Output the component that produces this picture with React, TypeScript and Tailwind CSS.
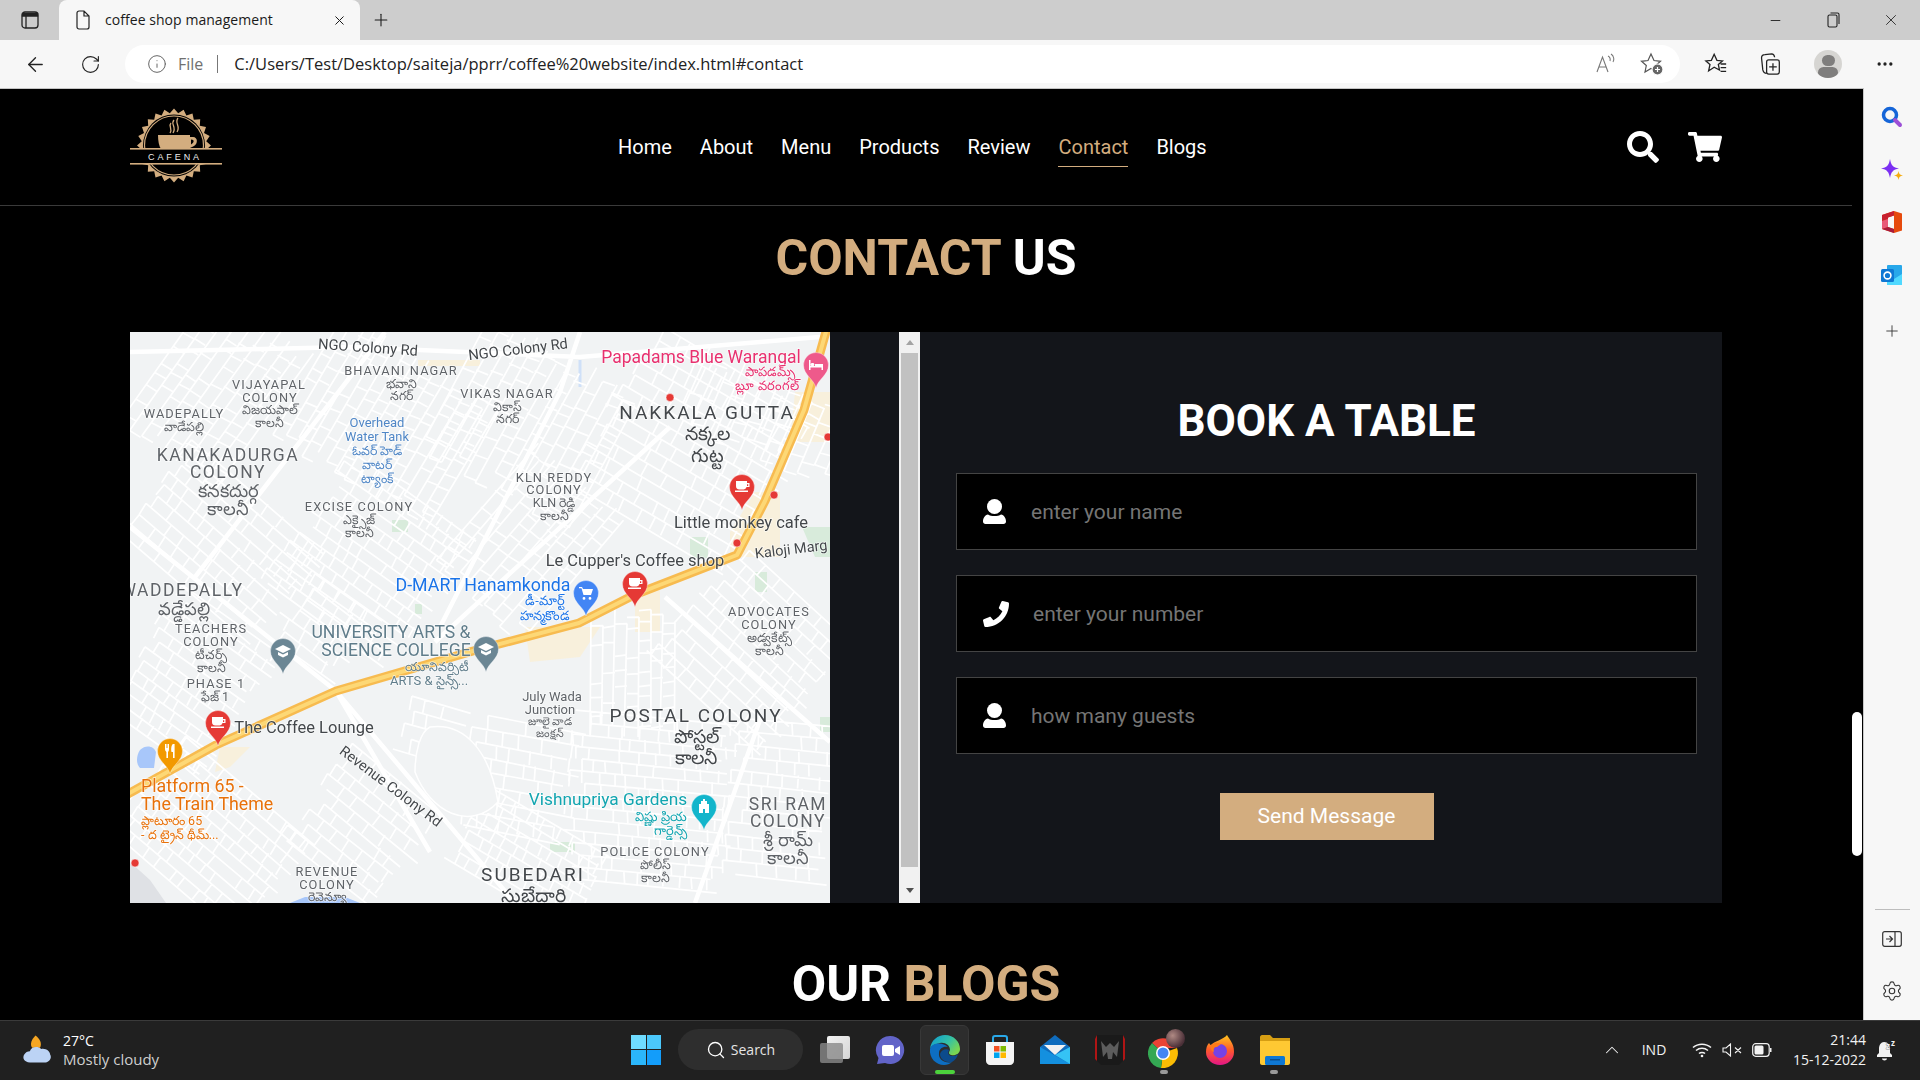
import React from 'react';
import { ArrowLeft, RotateCw, Info, Plus, X, Minus, Search, MoreHorizontal, ChevronUp, Settings } from 'lucide-react';
import { FaSearch, FaShoppingCart, FaPhone } from 'react-icons/fa';

const navItems = ['Home', 'About', 'Menu', 'Products', 'Review', 'Contact', 'Blogs'];

// label: text, x, centre y, size, colour, anchor, spacing, rotate
type L = [string, number, number, number?, string?, string?, number?, number?];
const G = '#5f6368';
const D = '#43474b';
const labels: L[] = [
  ['NGO Colony Rd', 238, 15, 14.7, D, 'middle', 0, 4],
  ['NGO Colony Rd', 388, 17, 14.7, D, 'middle', 0, -7],
  ['BHAVANI NAGAR', 271, 38, 12.8, G, 'middle', 1.1],
  ['భవాని', 271, 51, 12.5, G], ['నగర్', 271, 63, 12.5, G],
  ['VIJAYAPAL', 139, 52, 12.8, G, 'middle', 1.1], ['COLONY', 140, 65, 12.8, G, 'middle', 1.1],
  ['విజయపాల్', 140, 77, 12.5, G], ['కాలనీ', 139, 90, 12.5, G],
  ['WADEPALLY', 54, 81, 12.8, G, 'middle', 1.1], ['వాడేపల్లి', 54, 94, 12.5, G],
  ['VIKAS NAGAR', 377, 61, 12.8, G, 'middle', 1.1], ['వికాస్', 377, 74, 12.5, G], ['నగర్', 377, 86, 12.5, G],
  ['Papadams Blue Warangal', 571, 24.5, 17.5, '#e8316f'],
  ['పాపడమ్స్', 640, 39, 13, '#e8316f'], ['బ్లూ వరంగల్', 637, 53, 13, '#e8316f'],
  ['NAKKALA GUTTA', 577, 80, 19, D, 'middle', 2],
  ['నక్కల', 577, 101, 19, D], ['గుట్ట', 577, 123, 19, D],
  ['Overhead', 247, 90, 13, '#4f86c6'], ['Water Tank', 247, 104, 12.8, '#4f86c6'],
  ['ఓవర్ హెడ్', 247, 118, 12.5, '#4f86c6'], ['వాటర్', 247, 132, 12.5, '#4f86c6'], ['ట్యాంక్', 247, 146, 12.5, '#4f86c6'],
  ['KANAKADURGA', 98, 123, 17.5, G, 'middle', 1.5], ['COLONY', 98, 140, 17.5, G, 'middle', 1.5],
  ['కనకదుర్గ', 98, 159, 18, G], ['కాలనీ', 98, 177, 18, G],
  ['EXCISE COLONY', 229, 174, 12.8, G, 'middle', 1.1], ['ఎక్సైజ్', 229, 187, 12.5, G], ['కాలనీ', 229, 200, 12.5, G],
  ['KLN REDDY', 424, 145, 12.8, G, 'middle', 1.1], ['COLONY', 424, 157, 12.8, G, 'middle', 1.1],
  ['KLN రెడ్డి', 424, 170, 12.5, G], ['కాలనీ', 424, 183, 12.5, G],
  ['Little monkey cafe', 611, 190, 16.5, D],
  ['Kaloji Marg', 661, 217, 14.5, D, 'middle', 0, -7],
  ["Le Cupper's Coffee shop", 505, 228, 16.5, D],
  ['D-MART Hanamkonda', 353, 253, 17.8, '#1a73e8'],
  ['డీ-మార్ట్', 415, 268, 13, '#1a73e8'], ['హన్మకొండ', 415, 283, 13, '#1a73e8'],
  ['ADVOCATES', 639, 279, 12.8, G, 'middle', 1.1], ['COLONY', 639, 292, 12.8, G, 'middle', 1.1],
  ['అడ్వకేట్స్', 639, 305, 12.5, G], ['కాలనీ', 639, 318, 12.5, G],
  ['WADDEPALLY', 52, 258, 17.5, G, 'middle', 1.5], ['వడ్డేపల్లి', 54, 277, 18, G],
  ['TEACHERS', 81, 296, 12.8, G, 'middle', 1.1], ['COLONY', 81, 309, 12.8, G, 'middle', 1.1],
  ['టీచర్స్', 81, 322, 12.5, G], ['కాలనీ', 81, 335, 12.5, G],
  ['UNIVERSITY ARTS &', 261, 300, 17.6, '#607d8b'], ['SCIENCE COLLEGE', 266, 318, 17.6, '#607d8b'],
  ['యూనివర్సిటీ', 307, 334, 12.5, '#607d8b'], ['ARTS & సైన్స్...', 299, 348, 13, '#607d8b'],
  ['PHASE 1', 86, 351, 12.8, G, 'middle', 1.1], ['ఫేజ్ 1', 85, 364, 12.5, G],
  ['The Coffee Lounge', 174, 395, 16.5, D],
  ['Platform 65 -', 11, 454, 17.8, '#e8710a', 'start'],
  ['The Train Theme', 11, 472, 17.8, '#e8710a', 'start'],
  ['ప్లాటూరం 65', 11, 488, 12.5, '#e8710a', 'start'], ['- ద ట్రైన్ థీమ్...', 11, 502, 12.5, '#e8710a', 'start'],
  ['July Wada', 422, 364, 13, G], ['Junction', 420, 377, 13, G], ['జూలై వాడ', 420, 389, 11, G], ['జంక్షన్', 420, 401, 11, G],
  ['POSTAL COLONY', 566, 383, 19, D, 'middle', 2], ['పోస్టల్', 566, 404, 19, D], ['కాలనీ', 566, 425, 19, D],
  ['Revenue Colony Rd', 261, 454, 14.5, D, 'middle', 0, 37],
  ['Vishnupriya Gardens', 478, 467, 17.3, '#12a5b0'],
  ['విష్ణు ప్రియ', 531, 484, 13, '#12a5b0'], ['గార్డెన్స్', 540, 498, 13, '#12a5b0'],
  ['SRI RAM', 658, 472, 17.5, G, 'middle', 1.5], ['COLONY', 658, 489, 17.5, G, 'middle', 1.5],
  ['శ్రీ రామ్', 658, 508, 18, G], ['కాలనీ', 658, 526, 18, G],
  ['POLICE COLONY', 525, 519, 12.8, G, 'middle', 1.1], ['పోలీస్', 525, 532, 12.5, G], ['కాలనీ', 525, 545, 12.5, G],
  ['REVENUE', 197, 539, 12.8, G, 'middle', 1.1], ['COLONY', 197, 552, 12.8, G, 'middle', 1.1], ['రెవెన్యూ', 197, 564, 12.5, G],
  ['SUBEDARI', 403, 542, 19, D, 'middle', 2], ['సుబేదారి', 403, 563, 19, D],
];

// small streets, scattered per zone at the zone's own angle
const zones = [
  [90, 60, 180, 130, -55, 13], [260, 90, 150, 190, -60, 12], [400, 90, 160, 170, -62, 13], [560, 120, 200, 190, 30, 14],
  [90, 210, 190, 120, 40, 13], [240, 230, 170, 160, 35, 12], [400, 210, 170, 120, -50, 13], [650, 90, 90, 190, -68, 13],
  [60, 350, 130, 150, 35, 12], [190, 300, 90, 90, 35, 13], [620, 320, 170, 150, 42, 13], [500, 340, 130, 90, 90, 12],
  [80, 510, 180, 130, 40, 12], [230, 500, 130, 130, 38, 13], [390, 450, 120, 120, 10, 14], [520, 470, 170, 170, 5, 12],
  [650, 470, 110, 160, 5, 13], [400, 530, 160, 90, 30, 12], [300, 400, 70, 60, 15, 14],
];
function makeStreets() {
  let seed = 7;
  const rnd = () => { seed = (seed * 16807) % 2147483647; return seed / 2147483647; };
  let d = '';
  for (const [cx, cy, w, h, angle, step] of zones) {
    const a = (angle * Math.PI) / 180;
    const p = (u: number, v: number) =>
      `${(cx + u * Math.cos(a) - v * Math.sin(a)).toFixed(1)} ${(cy + u * Math.sin(a) + v * Math.cos(a)).toFixed(1)}`;
    for (let v = -h / 2; v < h / 2; v += step) {
      const s = -w / 2 + rnd() * 20;
      d += `M${p(s, v)}L${p(w / 2 - rnd() * 20, v + rnd() * 3)}`;
      for (let u = s; u < w / 2 - 10; u += step * (0.8 + rnd() * 0.9)) {
        if (v + step < h / 2 && rnd() > 0.18) d += `M${p(u, v)}L${p(u + rnd() * 2, v + step)}`;
      }
    }
  }
  return d;
}
const streets = makeStreets();
const road = 'M-4 463L86 413L206 359L343 319L449 291L504 263L607 223L635 169L674 78L697 -4';

function Pin({ x, y, color, kind }: { x: number; y: number; color: string; kind: 'cup' | 'cart' | 'cap' | 'fork' | 'bed' | 'tower' }) {
  return (
    <g transform={`translate(${x} ${y})`}>
      <path d="M0 23C-2 14 -12.5 10 -12.5 0A12.5 12.5 0 1 1 12.5 0C12.5 10 2 14 0 23Z" fill={color} stroke="#fff" strokeOpacity="0.6" strokeWidth="0.6" />
      {kind === 'cup' && <path d="M-6 -6H5V-4H7.5V0H4.5C4 2 2.5 2.5 0 2.5H-2.5C-5 2.5 -6 1 -6 -1ZM5 -2.8V-1H6.2V-2.8ZM-7 3.6H6V5H-7Z" fill="#fff" fillRule="evenodd" />}
      {kind === 'cart' && <path d="M-7 -6H-4L-3 -4H7L5 2H-2.5L-4.5 -4.8H-7ZM-2 4A1.4 1.4 0 1 0 -2 6.8A1.4 1.4 0 1 0 -2 4ZM4 4A1.4 1.4 0 1 0 4 6.8A1.4 1.4 0 1 0 4 4Z" fill="#fff" />}
      {kind === 'cap' && <path d="M0 -6L8 -2L0 2L-8 -2ZM-5 1L0 3.5L5 1V4L0 6.5L-5 4Z" fill="#fff" />}
      {kind === 'fork' && <path d="M-5 -7V-2C-5 0 -4 0 -3.6 1V7H-2V1C-1.6 0 -1 0 -1 -2V-7H-2V-3H-2.5V-7H-3.5V-3H-4V-7ZM3 -7C1 -6 1 -1 1.5 1H3V7H4.6V-7Z" fill="#fff" />}
      {kind === 'bed' && <path d="M-7 -5V5H-5.5V2.5H5.5V5H7V-1H-1V1H-5.5V-5ZM-3.5 -2A1.5 1.5 0 1 0 -3.5 0.9A1.5 1.5 0 1 0 -3.5 -2Z" fill="#fff" />}
      {kind === 'tower' && <path d="M-1 -8H1V-6H3V-3H5V6H1V2H-1V6H-5V-3H-3V-6H-1Z" fill="#fff" />}
    </g>
  );
}

function MapPanel() {
  return (
    <div className="w-[700px] h-[571px] shrink-0 overflow-hidden bg-[#f1f3f4]">
      <svg width="700" height="571" viewBox="0 0 700 571" className="blur-[0.5px]" fontFamily="Roboto, 'Noto Sans', sans-serif">
        <rect width="700" height="571" fill="#f1f3f4" />
        <path d="M288 28H350V34H288ZM625 160H650V225H600V200ZM395 295H470L450 325L400 330ZM505 255H530V300H505ZM90 415H120L100 435L85 440ZM665 60H700V110H660Z" fill="#f8f0dc" />
        <path d="M0 530L20 548L36 571H0Z" fill="#dfe1e5" />
        <path d="M262 188H278V200H262ZM672 195H700V225H685ZM625 240H637V260H625ZM285 272H292V282H285ZM420 510H445V520H420ZM690 385H700V400H690ZM560 205H578V226H560Z" fill="#d8ebdb" />
        <path d="M10 418C16 412 24 414 26 420L24 436L10 436C6 432 6 424 10 418ZM160 571L175 565H215L230 571Z" fill="#a8c7fa" />
        <path d="M450 28L450 55" stroke="#cfe0f8" strokeWidth="3" />
        <path d={streets} fill="none" stroke="#fff" strokeWidth="1.7" />
        <path d="M255 0L65 245M450 0L430 60L310 295M540 95L305 310M0 195L206 359L385 571M535 265L700 410M631 385L565 571M0 20L220 15L450 25L690 5M206 359L300 520" fill="none" stroke="#fff" strokeWidth="4.5" />
        <path d="M300 395C335 390 360 420 368 470C340 500 300 480 285 440C285 420 290 400 300 395Z" fill="#f1f3f4" stroke="#fff" strokeWidth="1.5" />
        <path d={road} fill="none" stroke="#f7bb50" strokeWidth="9" strokeLinejoin="round" />
        <path d={road} fill="none" stroke="#fdd876" strokeWidth="4" strokeLinejoin="round" />
        {[[540, 65.5], [698, 105], [644, 163], [607, 211], [5, 531]].map(([x, y]) => (
          <circle key={`${x}-${y}`} cx={x} cy={y} r="4" fill="#e53935" stroke="#fff" strokeWidth="0.5" />
        ))}
        {labels.map(([text, x, y, size = 14, fill = G, anchor = 'middle', spacing = 0, rot = 0], i) => (
          <text key={i} x={x} y={y + size * 0.36} fontSize={size} fill={fill} textAnchor={anchor as 'middle'} letterSpacing={spacing}
            stroke="#fff" strokeOpacity="0.65" strokeWidth="1.5" paintOrder="stroke" transform={rot ? `rotate(${rot} ${x} ${y})` : undefined}>
            {text}
          </text>
        ))}
        <Pin x={686} y={33} color="#ee5a8b" kind="bed" />
        <Pin x={612} y={155} color="#e53935" kind="cup" />
        <Pin x={505} y={252} color="#e53935" kind="cup" />
        <Pin x={88} y={391} color="#e53935" kind="cup" />
        <Pin x={456} y={261} color="#4285f4" kind="cart" />
        <Pin x={153} y={319} color="#6b8694" kind="cap" />
        <Pin x={356} y={317} color="#6b8694" kind="cap" />
        <Pin x={40} y={419} color="#f29900" kind="fork" />
        <Pin x={574} y={475} color="#12b5cb" kind="tower" />
      </svg>
    </div>
  );
}

function Logo() {
  const spikes = Array.from({ length: 48 }, (_, i) => {
    const a = (i * Math.PI) / 24 - Math.PI / 2;
    const r = i % 2 ? 32.5 : 37;
    return `${(44 + r * Math.cos(a)).toFixed(1)},${(37.5 + r * Math.sin(a)).toFixed(1)}`;
  }).join(' ');
  return (
    <svg width="92" height="76" viewBox="0 0 92 76" className="shrink-0 mb-[2px]">
      <polygon points={spikes} fill="#d3ad7f" />
      <circle cx="44" cy="37.5" r="31" fill="#000" />
      <circle cx="44" cy="37.5" r="29.5" fill="none" stroke="#d3ad7f" strokeWidth="1.2" />
      <rect x="0" y="40" width="92" height="16" fill="#000" />
      <path d="M28 27H60V29H63C68 29 68 36 64 38L58 41H31C29 38 28 33 28 27ZM61 31.5V36.5C64 35 65 31.5 61 31.5Z" fill="#d3ad7f" fillRule="evenodd" />
      <path d="M44 12C40 16 47 19 43 25M48 10C44 15 51 18 47 24M41 15C38 18 43 21 40 25" fill="none" stroke="#d3ad7f" strokeWidth="1.3" />
      <rect x="0" y="40" width="92" height="1.6" fill="#d3ad7f" />
      <rect x="0" y="55" width="92" height="1.6" fill="#d3ad7f" />
      <text x="45" y="52" fontSize="9" fill="#eeeeee" textAnchor="middle" letterSpacing="2.9" fontFamily="'Liberation Sans', sans-serif">CAFENA</text>
    </svg>
  );
}

function UserIcon() {
  return (
    <svg width="23" height="25" viewBox="0 0 23 25" fill="#fff" className="shrink-0 mr-[25px]">
      <circle cx="11.5" cy="7.5" r="7.5" />
      <path d="M5 15.5C8 17.5 15 17.5 18 15.5C21 16 23 19 23 22.5C23 24 22 25 20.5 25H2.5C1 25 0 24 0 22.5C0 19 2 16 5 15.5Z" />
    </svg>
  );
}

function BookInput({ icon, text }: { icon: React.ReactNode; text: string }) {
  return (
    <div className="flex items-center h-[77px] border border-[#444] bg-black pl-[26px]">
      {icon}
      <input placeholder={text} className="flex-1 pt-[2px] bg-transparent outline-none text-[21px] placeholder:text-[#757575]" />
    </div>
  );
}

function TaskIcon({ children, active, dot }: { children: React.ReactNode; active?: boolean; dot?: boolean }) {
  return (
    <div className="relative w-[55px] h-[50px] flex items-center justify-center">
      {active && <div className="absolute inset-x-[3px] inset-y-0 rounded-md bg-[#2d2d2d] border border-[#383838]" />}
      <div className="relative">{children}</div>
      {active && <div className="absolute bottom-[1px] left-[18px] w-[20px] h-[4px] rounded-full bg-[#4cd23c]" />}
      {dot && <div className="absolute bottom-[1px] left-[23px] w-[8px] h-[4px] rounded-full bg-[#9a9a9a]" />}
    </div>
  );
}

export default function App() {
  return (
    <div className="w-[1920px] h-[1080px] flex flex-col overflow-hidden bg-black font-['Roboto',sans-serif]">
      {/* tab strip */}
      <div className="h-[40px] shrink-0 flex items-end bg-[#cdcdcd] font-['Open_Sans',sans-serif] text-[#1a1a1a]">
        <div className="w-[59px] h-[40px] flex items-center justify-center">
          <svg width="18" height="18" viewBox="0 0 18 18" fill="none" stroke="#222" strokeWidth="1.3">
            <rect x="1" y="1" width="16" height="16" rx="3" />
            <path d="M1.5 2.5H16.5V5H1.5Z" fill="#222" />
            <path d="M5 5V17" />
          </svg>
        </div>
        <div className="w-[301px] h-[40px] flex items-center rounded-t-lg bg-[#f7f7f7]">
          <svg width="16" height="20" viewBox="0 0 16 20" fill="none" stroke="#222" strokeWidth="1.2" className="ml-[16px]">
            <path d="M2 3a2 2 0 0 1 2-2h5l5 5v11a2 2 0 0 1-2 2H4a2 2 0 0 1-2-2ZM9 1v5h5" />
          </svg>
          <span className="ml-[14px] mb-[2px] text-[14px] tracking-[0.05px]">coffee shop management</span>
          <X size={15} className="ml-auto mr-[13px]" strokeWidth={1.6} />
        </div>
        <div className="w-[42px] h-[40px] flex items-center justify-center"><Plus size={20} strokeWidth={1.3} /></div>
        <div className="ml-auto h-[40px] flex items-center">
          <div className="w-[58px] flex justify-center"><Minus size={15} strokeWidth={1.4} /></div>
          <div className="w-[58px] flex justify-center">
            <svg width="13" height="16" viewBox="0 0 13 16" fill="none" stroke="#222" strokeWidth="1.1">
              <rect x="1" y="3" width="9" height="12" rx="1.5" />
              <path d="M3.5 1H10.5A1.5 1.5 0 0 1 12 2.5V12" />
            </svg>
          </div>
          <div className="w-[58px] flex justify-center"><X size={18} strokeWidth={1.1} /></div>
        </div>
      </div>

      {/* toolbar */}
      <div className="h-[48px] shrink-0 flex items-center bg-[#f7f7f7] font-['Open_Sans',sans-serif] text-[#222]">
        <div className="w-[70px] flex justify-center"><ArrowLeft size={23} strokeWidth={1.4} /></div>
        <div className="w-[40px] flex justify-center"><RotateCw size={21} strokeWidth={1.3} /></div>
        <div className="ml-[15px] w-[1555px] h-[38px] flex items-center rounded-full bg-white">
          <Info size={20} strokeWidth={1.2} className="ml-[22px] text-[#666]" />
          <span className="ml-[11px] text-[16px] text-[#707070]">File</span>
          <div className="ml-[14px] w-[1px] h-[18px] bg-[#777]" />
          <span className="ml-[16px] text-[16.5px]">C:/Users/Test/Desktop/saiteja/pprr/coffee%20website/index.html#contact</span>
          <div className="ml-auto w-[46px] flex justify-center">
            <svg width="24" height="24" viewBox="0 0 24 24" fill="none" stroke="#777" strokeWidth="1.1">
              <path d="M3 20L8.5 5L14 20M5 15H12M14 4C16 5 16.5 7 16 9M17 2C20 4 20.5 8 19 10" />
            </svg>
          </div>
          <div className="w-[46px] flex justify-center mr-[5px]">
            <svg width="26" height="26" viewBox="0 0 26 26" fill="none" stroke="#555" strokeWidth="1.2">
              <path d="M12 3L15 9.5L21.5 10.3L16.7 14.5L18 20.5L12 17.5L6 21L7.3 14.5L2.5 10.3L9 9.5Z" />
              <circle cx="18.5" cy="18.5" r="5.5" fill="#666" stroke="#fff" />
              <path d="M18.5 16V21M16 18.5H21" stroke="#fff" />
            </svg>
          </div>
        </div>
        <div className="ml-[13px] w-[45px] flex justify-center">
          <svg width="24" height="24" viewBox="0 0 26 26" fill="none" stroke="#222" strokeWidth="1.4">
            <path d="M11 2.5L14 9L20 9.7L15.5 13.5L16.8 19.5L11 16.5L5 20.5L6.5 13.5L2 9.7L8 9ZM18 13H24M18 17H24M18 21H24" />
          </svg>
        </div>
        <div className="ml-[9px] w-[45px] flex justify-center">
          <svg width="22" height="24" viewBox="0 0 26 28" fill="none" stroke="#222" strokeWidth="1.5">
            <path d="M9 25C6 25 5 23 4.5 21L3 7C3 4 5 3 7 3L15 2C17 2 18 3 18.5 6" />
            <rect x="9" y="9" width="15" height="17" rx="2.5" />
            <path d="M16.5 13V22M12 17.5H21" />
          </svg>
        </div>
        <div className="ml-[22px] w-[28px] h-[28px] rounded-full bg-[#d6d5d2] overflow-hidden flex flex-col items-center">
          <div className="mt-[5px] w-[13px] h-[13px] rounded-full bg-[#7f7e7d]" />
          <div className="mt-[1px] w-[20px] h-[14px] rounded-full bg-[#7f7e7d]" />
        </div>
        <div className="ml-[29px] w-[28px] flex justify-center"><MoreHorizontal size={20} strokeWidth={2} /></div>
      </div>

      <div className="flex-1 min-h-0 flex">
        {/* page */}
        <div className="relative w-[1863px] shrink-0 overflow-hidden bg-black border-t border-[#c4c4c4] text-white">
          <div className="w-[1852px]">
            <header className="h-[117px] flex items-center px-[130px] border-b border-[#3a3a3a]">
              <Logo />
              <nav className="ml-[396px] flex gap-[28px] text-[20px]">
                {navItems.map(item => (
                  <a key={item} className={item === 'Contact' ? 'text-[#d3ad7f] border-b border-[#d3ad7f] pb-[4px] mb-[-5px]' : ''}>{item}</a>
                ))}
              </nav>
              <div className="ml-auto flex items-center gap-[29px]">
                <FaSearch size={32} />
                <FaShoppingCart size={34} />
              </div>
            </header>
            <h2 className="mt-[23px] text-center text-[50px] leading-[59px] font-bold text-[#d3ad7f]">CONTACT <span className="text-white">US</span></h2>
            <section className="mt-[44px] mx-[130px] h-[571px] flex bg-[#13151a]">
              <MapPanel />
              <div className="ml-[69px] w-[21px] shrink-0 flex flex-col items-center bg-[#f1f1f1]">
                <div className="h-[21px] flex items-center"><div className="border-x-[4px] border-x-transparent border-b-[5px] border-b-[#a3a3a3]" /></div>
                <div className="w-[17px] flex-1 bg-[#c1c1c1]" />
                <div className="h-[36px] flex items-end pb-[10px]"><div className="border-x-[4px] border-x-transparent border-t-[5px] border-t-[#505050]" /></div>
              </div>
              <div className="flex-1 pl-[36px] pr-[25px] flex flex-col">
                <h3 className="mt-[61px] text-center text-[44px] leading-[57px] font-bold">BOOK A TABLE</h3>
                <div className="mt-[23px] flex flex-col gap-[25px]">
                  <BookInput text="enter your name" icon={<UserIcon />} />
                  <BookInput text="enter your number" icon={<FaPhone size={26} className="shrink-0 mr-[24px]" />} />
                  <BookInput text="how many guests" icon={<UserIcon />} />
                </div>
                <button className="mt-[39px] self-center w-[214px] h-[47px] pt-[1px] bg-[#d3ad7f] text-[21px] text-white">Send Message</button>
              </div>
            </section>
            <h2 className="mt-[52px] text-center text-[50px] leading-[59px] font-bold text-white">OUR <span className="text-[#d3ad7f]">BLOGS</span></h2>
          </div>
          {/* page scrollbar thumb */}
          <div className="absolute right-[1px] top-[623px] w-[10px] h-[144px] rounded-full bg-white" />
        </div>

        {/* edge sidebar */}
        <aside className="flex-1 flex flex-col items-center bg-[#f7f7f7] border-l border-[#c8c8c8] pt-[3px] pb-[3px]">
          <div className="h-[52.5px] flex items-center">
            <svg width="22" height="22" viewBox="0 0 22 22" fill="none">
              <circle cx="9" cy="9" r="6.5" stroke="#1565d8" strokeWidth="3.5" />
              <path d="M14 14L19 19" stroke="#9c4fd6" strokeWidth="4" strokeLinecap="round" />
            </svg>
          </div>
          <div className="h-[52.5px] flex items-center">
            <svg width="24" height="24" viewBox="0 0 24 24">
              <path d="M10 1C11 7 13 9.5 19 10.5C13 11.5 11 14 10 20C9 14 7 11.5 1 10.5C7 9.5 9 7 10 1Z" fill="#7b2ff2" />
              <path d="M18.5 13C19 16 20 17 23 17.5C20 18 19 19 18.5 22C18 19 17 18 14 17.5C17 17 18 16 18.5 13Z" fill="#f5ac0f" />
            </svg>
          </div>
          <div className="h-[52.5px] flex items-center">
            <svg width="22" height="26" viewBox="0 0 22 24">
              <path d="M13 1L21 3.5V20.5L13 23V5.5L7 7.5V17L13 19V23L1 19V5Z" fill="#e64a0d" />
              <path d="M13 1L1 5V11L7 9V7.5L13 5.5Z" fill="#c8202f" />
              <path d="M1 11L7 9V17L1 19Z" fill="#e85a78" />
              <path d="M1 19L13 23V19L7 17Z" fill="#a81a3c" />
            </svg>
          </div>
          <div className="h-[52.5px] flex items-center">
            <svg width="22" height="22" viewBox="0 0 22 22">
              <rect x="6" y="1" width="15" height="20" rx="1" fill="#28a8ea" />
              <path d="M21 10L13 15L6 11V21H21Z" fill="#50d9ff" />
              <rect x="0" y="5" width="13" height="13" rx="1.5" fill="#0f78d4" />
              <circle cx="6.5" cy="11.5" r="3.4" fill="none" stroke="#fff" strokeWidth="1.6" />
            </svg>
          </div>
          <div className="mt-[4px] h-[52.5px] flex items-center"><Plus size={18} strokeWidth={1.2} className="text-[#333]" /></div>
          <div className="mt-auto w-[35px] h-[1px] bg-[#bdbdbd]" />
          <div className="mt-[3px] h-[52px] flex items-center">
            <svg width="20" height="16" viewBox="0 0 20 16" fill="none" stroke="#333" strokeWidth="1.2">
              <rect x="0.7" y="0.7" width="18.6" height="14.6" rx="2" />
              <path d="M13 1V15M4 8H10M7.5 5L10.5 8L7.5 11" />
            </svg>
          </div>
          <div className="h-[52px] flex items-center"><Settings size={22} strokeWidth={1.2} className="text-[#333]" /></div>
        </aside>
      </div>

      {/* windows taskbar */}
      <div className="h-[60px] shrink-0 flex items-center bg-[#202020] border-t border-[#3a3a3a] pl-[22px] pb-[2px] font-['Open_Sans',sans-serif] text-white">
        <div className="w-[609px] flex items-center">
          <svg width="36" height="36" viewBox="0 0 32 32">
            <path d="M12 3C8 7 7 11 9 14H16C18 10 16 6 12 3Z" fill="#f5a623" />
            <path d="M7 27C2 27 0 23 2 20C3 18 5 17 7 17C8 13 14 12 17 15C21 14 25 17 25 20C27 23 24 27 21 27Z" fill="#bcd3f5" />
          </svg>
          <div className="ml-[5px] text-[15px] leading-[19px]">
            <div className="text-[14px]">27°C</div>
            <div className="text-[#cfcfcf]">Mostly cloudy</div>
          </div>
        </div>
        <div className="w-[30px] h-[30px] grid grid-cols-2 gap-[1px]">
          <div className="bg-[#6fdcff]" /><div className="bg-[#4bc8fb]" />
          <div className="bg-[#2bb6fb]" /><div className="bg-[#139dfa]" />
        </div>
        <div className="ml-[17px] w-[125px] h-[41px] rounded-full bg-[#2e2e2e] flex items-center justify-center gap-[5px]">
          <Search size={20} strokeWidth={1.6} />
          <span className="text-[14px] text-[#e5e5e5]">Search</span>
        </div>
        <div className="ml-[4px] flex items-center">
          <TaskIcon>
            <div className="relative w-[30px] h-[28px]">
              <div className="absolute left-[7px] top-0 w-[23px] h-[23px] rounded-[2px] bg-gradient-to-br from-[#f2f2f2] to-[#d5d5d5]" />
              <div className="absolute left-0 top-[7px] w-[23px] h-[20px] rounded-[2px] bg-[#8a8a8a]/80" />
            </div>
          </TaskIcon>
          <TaskIcon>
            <svg width="30" height="30" viewBox="0 0 30 30">
              <path d="M15 1A14 14 0 1 1 10 28L2 29L3.5 23A14 14 0 0 1 15 1Z" fill="#6264c8" />
              <rect x="7" y="10" width="12" height="11" rx="2" fill="#fff" />
              <path d="M20 14L25 11V20L20 17Z" fill="#fff" />
            </svg>
          </TaskIcon>
          <TaskIcon active>
            <svg width="32" height="32" viewBox="0 0 32 32">
              <defs>
                <linearGradient id="edgeA" x1="0" y1="0" x2="1" y2="0.6"><stop offset="0" stopColor="#0c9bd6" /><stop offset="0.6" stopColor="#35c1a4" /><stop offset="1" stopColor="#7bd651" /></linearGradient>
              </defs>
              <path d="M1 15C2 6 9 1 16 1C25 1 31 8 31 15C31 20 26 22 22 21C19 20 20 18 21 16C21 11 16 8 11 9C6 10 2 12 1 15Z" fill="url(#edgeA)" />
              <path d="M1 15C0 24 7 31 15 31C18 31 21 30 23 28C17 30 9 26 10 19C10 15 14 12 19 13C14 8 3 8 1 15Z" fill="#0d6ec2" />
              <path d="M23 28C16 29 11 25 11 20C12 16 17 14 20 16C18 20 20 22 24 22C26 22 28 21 29 20C28 24 26 26 23 28Z" fill="#0c4b8c" />
            </svg>
          </TaskIcon>
          <TaskIcon>
            <svg width="30" height="32" viewBox="0 0 30 32">
              <path d="M8 8V4C8 2 9 2 10 2H20C21 2 22 2 22 4V8" fill="none" stroke="#29a8e8" strokeWidth="2" />
              <path d="M1 8H29V27C29 29 27 31 25 31H5C3 31 1 29 1 27Z" fill="#f4f4f4" />
              <rect x="9" y="12" width="5.5" height="5.5" fill="#f25022" /><rect x="15.5" y="12" width="5.5" height="5.5" fill="#7fba00" />
              <rect x="9" y="18.5" width="5.5" height="5.5" fill="#00a4ef" /><rect x="15.5" y="18.5" width="5.5" height="5.5" fill="#ffb900" />
            </svg>
          </TaskIcon>
          <TaskIcon>
            <svg width="30" height="30" viewBox="0 0 30 30">
              <path d="M15 0L30 12V29H0V12Z" fill="#0f6cbd" />
              <path d="M4 10H26L15 20Z" fill="#f1f1f1" />
              <path d="M0 12L30 29H0Z" fill="#1490df" /><path d="M30 12V29L15 20Z" fill="#35c3f5" />
            </svg>
          </TaskIcon>
          <TaskIcon>
            <svg width="30" height="32" viewBox="0 0 30 30">
              <path d="M2 0H28L30 4V24L24 30H6L0 24V4Z" fill="#1a1a1a" />
              <path d="M0 4L2 0V26L0 24ZM30 4L28 0V26L30 24Z" fill="#b01515" />
              <path d="M6 6L11 12L15 8L19 12L24 6L22 22L18 17L17 24H13L12 17L8 22Z" fill="#5c5c5c" />
            </svg>
          </TaskIcon>
          <TaskIcon dot>
            <div className="relative w-[34px] h-[34px]">
              <svg width="30" height="30" viewBox="0 0 30 30" className="absolute left-0 top-[5px]">
                <path d="M15 15L4 5A15 15 0 0 1 29 10H15Z" fill="#ea4335" />
                <path d="M15 15L29 10A15 15 0 0 1 13 30Z" fill="#fbbc04" />
                <path d="M15 15L13 30A15 15 0 0 1 4 5Z" fill="#34a853" />
                <circle cx="15" cy="15" r="7" fill="#fff" /><circle cx="15" cy="15" r="5.5" fill="#4285f4" />
              </svg>
              <div className="absolute right-[-3px] top-[-4px] w-[19px] h-[19px] rounded-full bg-[radial-gradient(circle_at_35%_35%,#b08a84,#4b3038_70%)]" />
            </div>
          </TaskIcon>
          <TaskIcon>
            <svg width="30" height="30" viewBox="0 0 30 30">
              <defs>
                <linearGradient id="foxA" x1="0.5" y1="0" x2="0.5" y2="1"><stop offset="0" stopColor="#ffc61e" /><stop offset="0.5" stopColor="#ff5a2c" /><stop offset="1" stopColor="#e31587" /></linearGradient>
              </defs>
              <path d="M22 0C24 4 29 8 29 17A14 13 0 0 1 1 17C1 13 2 10 4 8C5 9 5 10 6 10C9 6 18 5 22 0Z" fill="url(#foxA)" />
              <circle cx="15" cy="16" r="7" fill="#7542e5" />
              <path d="M6 10C10 7 14 8 16 9L12 12C9 12 8 14 9 17C6 16 5 13 6 10Z" fill="#ff7a18" />
            </svg>
          </TaskIcon>
          <TaskIcon dot>
            <svg width="30" height="30" viewBox="0 0 30 30">
              <path d="M0 2C0 1 1 0 2 0H10L13 3H30V10H0Z" fill="#d69e13" />
              <path d="M0 6H30V28C30 29 29 30 28 30H2C1 30 0 29 0 28Z" fill="#ffc933" />
              <rect x="5" y="21" width="20" height="9" rx="1.5" fill="#0f78d4" />
              <rect x="10" y="24" width="10" height="1.5" fill="#0a4f8f" />
            </svg>
          </TaskIcon>
        </div>
        <div className="ml-auto flex items-center text-[#f2f2f2] pr-[16px]">
          <div className="w-[32px] flex justify-center"><ChevronUp size={22} strokeWidth={1.1} /></div>
          <div className="w-[52px] text-center text-[14px]">IND</div>
          <div className="ml-[7px] w-[30px] flex justify-center">
            <svg width="20" height="16" viewBox="0 0 20 16" fill="none" stroke="#f2f2f2" strokeWidth="1.5">
              <path d="M1 5.5C6 1 14 1 19 5.5M4 8.5C7.5 5.5 12.5 5.5 16 8.5M7 11.5C8.5 10 11.5 10 13 11.5" />
              <circle cx="10" cy="14" r="1.3" fill="#f2f2f2" stroke="none" />
            </svg>
          </div>
          <div className="w-[30px] flex justify-center">
            <svg width="20" height="14" viewBox="0 0 20 14" fill="none" stroke="#f2f2f2" strokeWidth="1.1">
              <path d="M1 5H4L8.5 1V13L4 9H1ZM13 4.5L19 10M19 4.5L13 10" />
            </svg>
          </div>
          <div className="w-[30px] flex justify-center">
            <svg width="20" height="14" viewBox="0 0 20 14">
              <rect x="0.7" y="0.7" width="16.5" height="12.6" rx="3" fill="none" stroke="#f2f2f2" strokeWidth="1.2" />
              <rect x="2.5" y="2.5" width="9" height="9" rx="1.5" fill="#f2f2f2" />
              <rect x="18" y="5" width="1.5" height="4" fill="#f2f2f2" />
            </svg>
          </div>
          <div className="w-[89px] text-right text-[14px] leading-[20px]">
            <div>21:44</div>
            <div>15-12-2022</div>
          </div>
          <div className="w-[38px] flex justify-center pl-[4px]">
            <svg width="22" height="24" viewBox="0 0 22 24">
              <path d="M8 4C12 4 14 7 14 11V15L16 17V19H1V17L3 15V11C3 7 5 4 8 4ZM6 20.5H11C11 23 6 23 6 20.5Z" fill="#f2f2f2" />
              <text x="10" y="11" fontSize="8" fontWeight="700" fill="#f2f2f2" stroke="#202020" strokeWidth="0.5" paintOrder="stroke">z</text>
              <text x="15" y="8" fontSize="8" fontWeight="700" fill="#f2f2f2">z</text>
            </svg>
          </div>
        </div>
      </div>
    </div>
  );
}
